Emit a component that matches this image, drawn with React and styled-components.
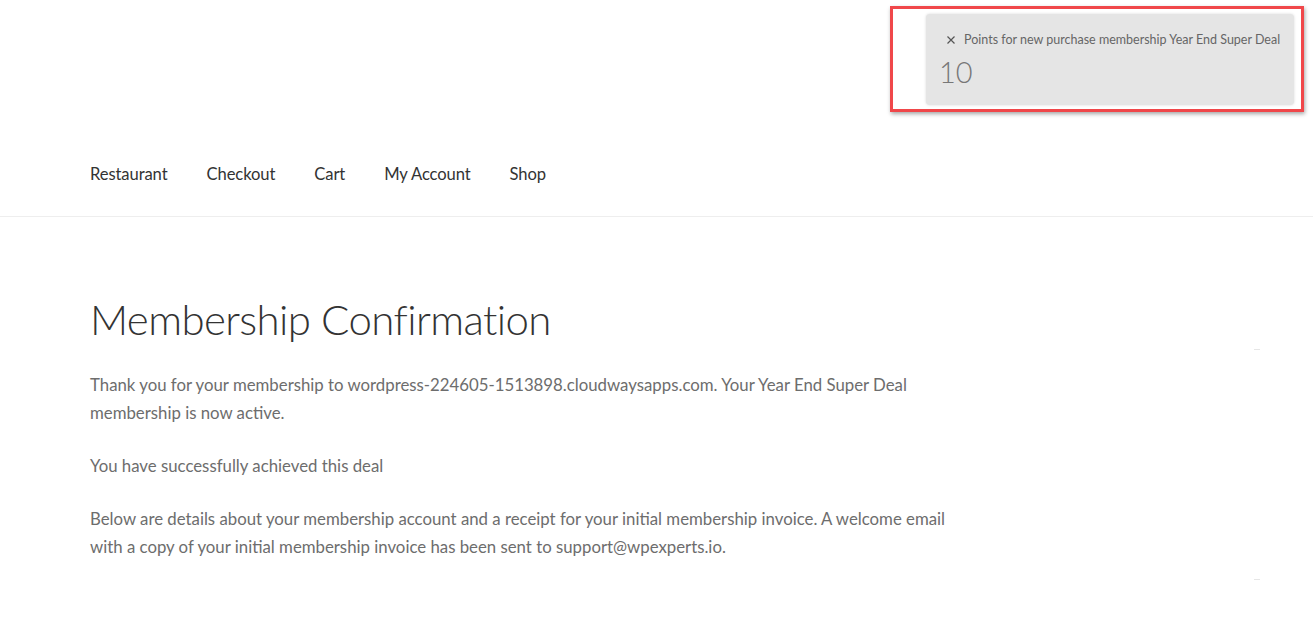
import React from 'react'
import styled, { createGlobalStyle } from 'styled-components'

const GlobalStyle = createGlobalStyle`
  html, body {
    margin: 0;
    padding: 0;
    background: #ffffff;
  }
  body {
    font-family: Lato, "Open Sans", sans-serif;
    color: #6d6d6d;
  }
  * {
    box-sizing: border-box;
  }
`

const navItems = ['Restaurant', 'Checkout', 'Cart', 'My Account', 'Shop']

const App = () => {
  return (
    <Page>
      <GlobalStyle />
      <Header>
        <Nav>
          {navItems.map((item) => (
            <NavLink key={item} href="#">{item}</NavLink>
          ))}
        </Nav>
      </Header>

      <Body>
        <Content>
          <Title>Membership Confirmation</Title>
          <Text>
            Thank you for your membership to wordpress-224605-1513898.cloudwaysapps.com. Your Year End Super Deal
            membership is now active.
          </Text>
          <Text>You have successfully achieved this deal</Text>
          <Text>
            Below are details about your membership account and a receipt for your initial membership invoice. A welcome email
            with a copy of your initial membership invoice has been sent to support@wpexperts.io.
          </Text>
        </Content>
        <Sidebar>
          <SideMark top={132} />
          <SideMark top={362} />
        </Sidebar>
      </Body>

      <Highlight>
        <Notice>
          <NoticeHead>
            <CloseIcon viewBox="0 0 10 10">
              <path d="M1.5 1.5 L8.5 8.5 M8.5 1.5 L1.5 8.5" stroke="#555" strokeWidth="1.2" fill="none" />
            </CloseIcon>
            <NoticeText>Points for new purchase membership Year End Super Deal</NoticeText>
          </NoticeHead>
          <Points>10</Points>
        </Notice>
      </Highlight>
    </Page>
  )
}

const Page = styled.div`
  position: relative;
  width: 100%;
  min-height: 617px;
`

const Header = styled.header`
  height: 217px;
  display: flex;
  align-items: flex-end;
  padding: 0 0 30px 90px;
  border-bottom: 1px solid #eeeeee;
`

const Nav = styled.nav`
  display: flex;
  gap: 39px;
`

const NavLink = styled.a`
  font-size: 16.6px;
  line-height: 24px;
  color: #333333;
  text-decoration: none;
  letter-spacing: -0.1px;
`

const Body = styled.main`
  display: flex;
  padding-left: 90px;
`

const Content = styled.div`
  width: 872px;
  padding-top: 75px;
`

const Title = styled.h1`
  margin: 0 0 25px;
  font-size: 42px;
  line-height: 54px;
  font-weight: 300;
  color: #333333;
  letter-spacing: -0.6px;
`

const Text = styled.p`
  margin: 0 0 25px;
  font-size: 16.8px;
  line-height: 28px;
  color: #6d6d6d;
`

const Sidebar = styled.aside`
  position: relative;
  flex: 1;
`

const SideMark = styled.div`
  position: absolute;
  left: 292px;
  top: ${(p) => p.top}px;
  width: 6px;
  height: 1px;
  background: #e6e6e6;
`

const Highlight = styled.div`
  position: absolute;
  top: 6px;
  left: 890px;
  width: 414px;
  height: 106px;
  border: 3px solid #f0474a;
  box-shadow: 1px 2px 4px rgba(0, 0, 0, 0.35);
  background: #ffffff;
  padding: 5px 7px 4px 33px;
`

const Notice = styled.div`
  height: 100%;
  background: #e5e5e5;
  border-radius: 4px;
  box-shadow: 0 0 3px rgba(0, 0, 0, 0.15);
  padding: 19px 10px 0 13px;
`

const NoticeHead = styled.div`
  display: flex;
  align-items: center;
  gap: 8px;
  padding-left: 7px;
`

const CloseIcon = styled.svg`
  width: 10px;
  height: 10px;
  flex-shrink: 0;
`

const NoticeText = styled.span`
  font-size: 12.5px;
  line-height: 14px;
  color: #666666;
  white-space: nowrap;
`

const Points = styled.div`
  margin-top: 9px;
  font-size: 29px;
  line-height: 32px;
  font-weight: 300;
  color: #777777;
`

export default App
